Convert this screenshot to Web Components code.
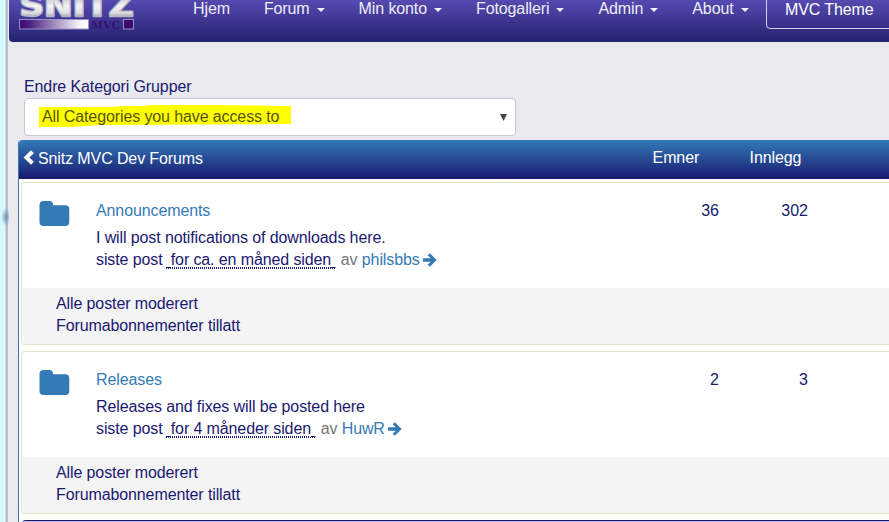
<!DOCTYPE html>
<html lang="no"><head><meta charset="utf-8"><title>Snitz MVC Dev Forums</title>
<style>
html,body{margin:0;height:522px;overflow:hidden}
body{font:16px/22px "Liberation Sans",Arial,sans-serif;letter-spacing:-.11px;color:#191970;background:#e9e9ee}
</style></head><body>
<forum-page></forum-page>
<script>
function define(name, html, fill){
  customElements.define(name, class extends HTMLElement{
    constructor(){
      super();
      const t=document.createElement('template');t.innerHTML=html;
      this.attachShadow({mode:'open'}).append(t.content.cloneNode(true));
    }
    connectedCallback(){ if(fill) fill(this,this.shadowRoot); }
  });
}
define('snitz-logo',`<style>:host{display:block;width:118px;height:32px}svg{display:block}text{letter-spacing:0}</style>
<svg width="118" height="32" viewBox="0 0 118 32">
<defs><linearGradient id="m" gradientUnits="userSpaceOnUse" x1="0" y1="0" x2="0" y2="17"><stop offset="0" stop-color="#d2d2da"/><stop offset=".35" stop-color="#f4f4f6"/><stop offset=".75" stop-color="#dedee3"/><stop offset="1" stop-color="#a4a4ae"/></linearGradient>
<linearGradient id="b"><stop offset="0" stop-color="#3b0a74"/><stop offset=".15" stop-color="#4a2282"/><stop offset=".85" stop-color="#f4f1f8"/><stop offset="1" stop-color="#fff"/></linearGradient></defs>
<text x="1.5" y="16" font-family="DejaVu Sans" font-weight="bold" font-size="31" textLength="114" lengthAdjust="spacingAndGlyphs" fill="url(#m)" stroke="#b4b4c0" stroke-width="2.6" stroke-linejoin="round" paint-order="stroke">SNITZ</text>
<rect x="1.5" y="19.5" width="69" height="9.5" fill="url(#b)" stroke="#9a8fc4"/>
<text x="73" y="29" font-family="DejaVu Serif" font-weight="bold" font-size="11" textLength="29" lengthAdjust="spacingAndGlyphs" fill="#35116f">MVC</text>
<rect x="105.5" y="19.5" width="10" height="9.5" fill="#3b0a6c" stroke="#9a8fc4"/>
</svg>`);
define('nav-item',`<style>:host{display:flex;align-items:center;gap:7px;color:#eeeef8;white-space:nowrap}
i{display:block;border:4px solid transparent;border-top-color:#eeeef8;border-bottom:0;margin-top:1px}
:host([plain]) i{display:none}</style><span><slot></slot></span><i></i>`);
define('nav-bar',`<style>:host{display:flex;box-sizing:border-box;height:42px;padding-left:9px;background:linear-gradient(#564ab0,#3d3591 50%,#23236f);border-radius:0 0 0 4px;align-items:flex-start}
nav{display:flex;margin-left:57px;margin-top:-2px;gap:34px}
div{box-sizing:border-box;width:160px;height:35px;flex:none;margin:-6px 0 0 17.5px;border:1px solid #d4d1ea;border-radius:4px;padding:4px 18px;color:#fff;white-space:nowrap}</style>
<snitz-logo></snitz-logo><nav><nav-item plain>Hjem</nav-item><nav-item>Forum</nav-item><nav-item>Min konto</nav-item><nav-item>Fotogalleri</nav-item><nav-item>Admin</nav-item><nav-item>About</nav-item></nav><div>MVC Theme</div>`);
define('category-select',`<style>:host{display:block;margin:34px 0 0 15px}
label{display:block;height:22px}
.box{box-sizing:border-box;width:492px;height:38px;border:1px solid #c6c8d0;border-radius:4px;background:#fff;display:flex;align-items:center;justify-content:space-between;padding:0 8px 0 14px}
.mark{display:grid;align-items:center;width:253px;height:24px;color:#55550a}
.mark>*{grid-area:1/1}.mark span{padding:0 0 0 3px;white-space:nowrap}</style>
<label>Endre Kategori Grupper</label><div class="box"><div class="mark"><svg width="253" height="24"><path d="M0 2 72 2Q88 0 105 1L120-1 175 0 252 1V19L60 20 32 22 0 22Z" fill="#ff0"/></svg><span>All Categories you have access to</span></div><svg width="7" height="7"><path d="M0 0h7L3.5 7Z" fill="#444"/></svg></div>`);
define('forum-card',`<style>:host{display:block;box-sizing:border-box;height:163px;border:1px solid #dfe4cd;border-radius:4px;background:#fff;margin-bottom:6px;overflow:hidden}
.row{display:grid;grid-template-columns:74px 524px 99px 89px;height:105px;box-sizing:border-box;padding-top:17px}
.icon{padding:0 0 0 17px}.n{text-align:right;letter-spacing:0}.a{color:#337ab7}.title{margin-bottom:5px}
.line{display:flex;white-space:pre}.by{color:#777;margin-left:1px}
.when{height:19px;margin-left:-1px;border-bottom:1px dotted #191970}
.date{text-decoration:underline dotted 1px;text-underline-offset:2px;margin-left:.6px}
.pad{text-decoration:underline solid 1px;text-underline-offset:2px}
.arrow{margin:4px 0 0 3.5px}
footer{margin-left:1px;background:#f4f4f4;height:56px;box-sizing:border-box;padding:5px 0 0 33px}</style>
<div class="row"><div class="icon"><svg width="31" height="26"><path d="M4.5 1H10.5Q14 1 14 5V5.3H26.3Q30.3 5.3 30.3 9.3V22Q30.3 26 26.3 26H4.5Q.5 26 .5 22V5Q.5 1 4.5 1Z" fill="#337ab7"/></svg></div>
<div><div class="title a"></div><div class="desc"></div><div class="line">siste post <span class="when"><span class="pad">&nbsp;</span><span class="date"></span><span class="pad">&nbsp;</span></span><span class="by">&nbsp;av </span><span class="a user"></span><svg class="arrow" width="15" height="14" viewBox="0 0 15 14"><path d="M0 5.3H7.8L4.7 2.3 6.8.2 13.7 7 6.8 13.8 4.7 11.7 7.8 8.7H0Z" fill="#337ab7"/></svg></div></div>
<div class="n topics"></div><div class="n posts"></div></div><footer><div>Alle poster moderert</div><div>Forumabonnementer tillatt</div></footer>`,
(h,r)=>{for(const k of ['title','desc','date','user','topics','posts'])r.querySelector('.'+k).textContent=h.dataset[k];});
define('forum-panel',`<style>:host{display:block;margin:4px 0 0 9px;border-left:1px solid #337ab7;background:#fdfefa;border-radius:4px 0 0;height:382px}
header{display:grid;grid-template-columns:633.6px 97px 1fr;height:39px;box-sizing:border-box;padding:7px 0 0;background:linear-gradient(#337ab7,#191970);border-radius:4px 0 0;color:#fff}
.name{display:flex;padding:1px 0 0 4px;gap:4px}.name svg{margin-top:2px}
main{padding:3px 0 0 2px}.next{height:4px;margin-left:1px;border-top:1px solid #191970;background:#b9b6e2;border-radius:4px 0 0}</style>
<header><div class="name"><svg width="11" height="15"><path d="M8 .3 10.9 3.2 6.4 7.5 10.9 11.8 8 14.7.5 7.5Z" fill="#fff"/></svg><span>Snitz MVC Dev Forums</span></div><span>Emner</span><span>Innlegg</span></header>
<main><forum-card data-title="Announcements" data-desc="I will post notifications of downloads here." data-date="for ca. en måned siden" data-user="philsbbs" data-topics="36" data-posts="302"></forum-card>
<forum-card data-title="Releases" data-desc="Releases and fixes will be posted here" data-date="for 4 måneder siden" data-user="HuwR" data-topics="2" data-posts="3"></forum-card><div class="next"></div></main>`);
define('forum-page',`<style>:host{display:grid;grid-template-columns:9px 900px;width:889px;height:522px;overflow:hidden}
.edge{background:radial-gradient(ellipse 5px 9px at 6px 27px,#7894b8,transparent) 0 190px/9px 60px no-repeat,linear-gradient(90deg,#d4f8fd 0,#dcf9fd 5px,#a9c3ca 6px,#b4c2cb 8px,#e9e9ee 8px)}</style>
<div class="edge"></div><div><nav-bar></nav-bar><category-select></category-select><forum-panel></forum-panel></div>`);
</script></body></html>
